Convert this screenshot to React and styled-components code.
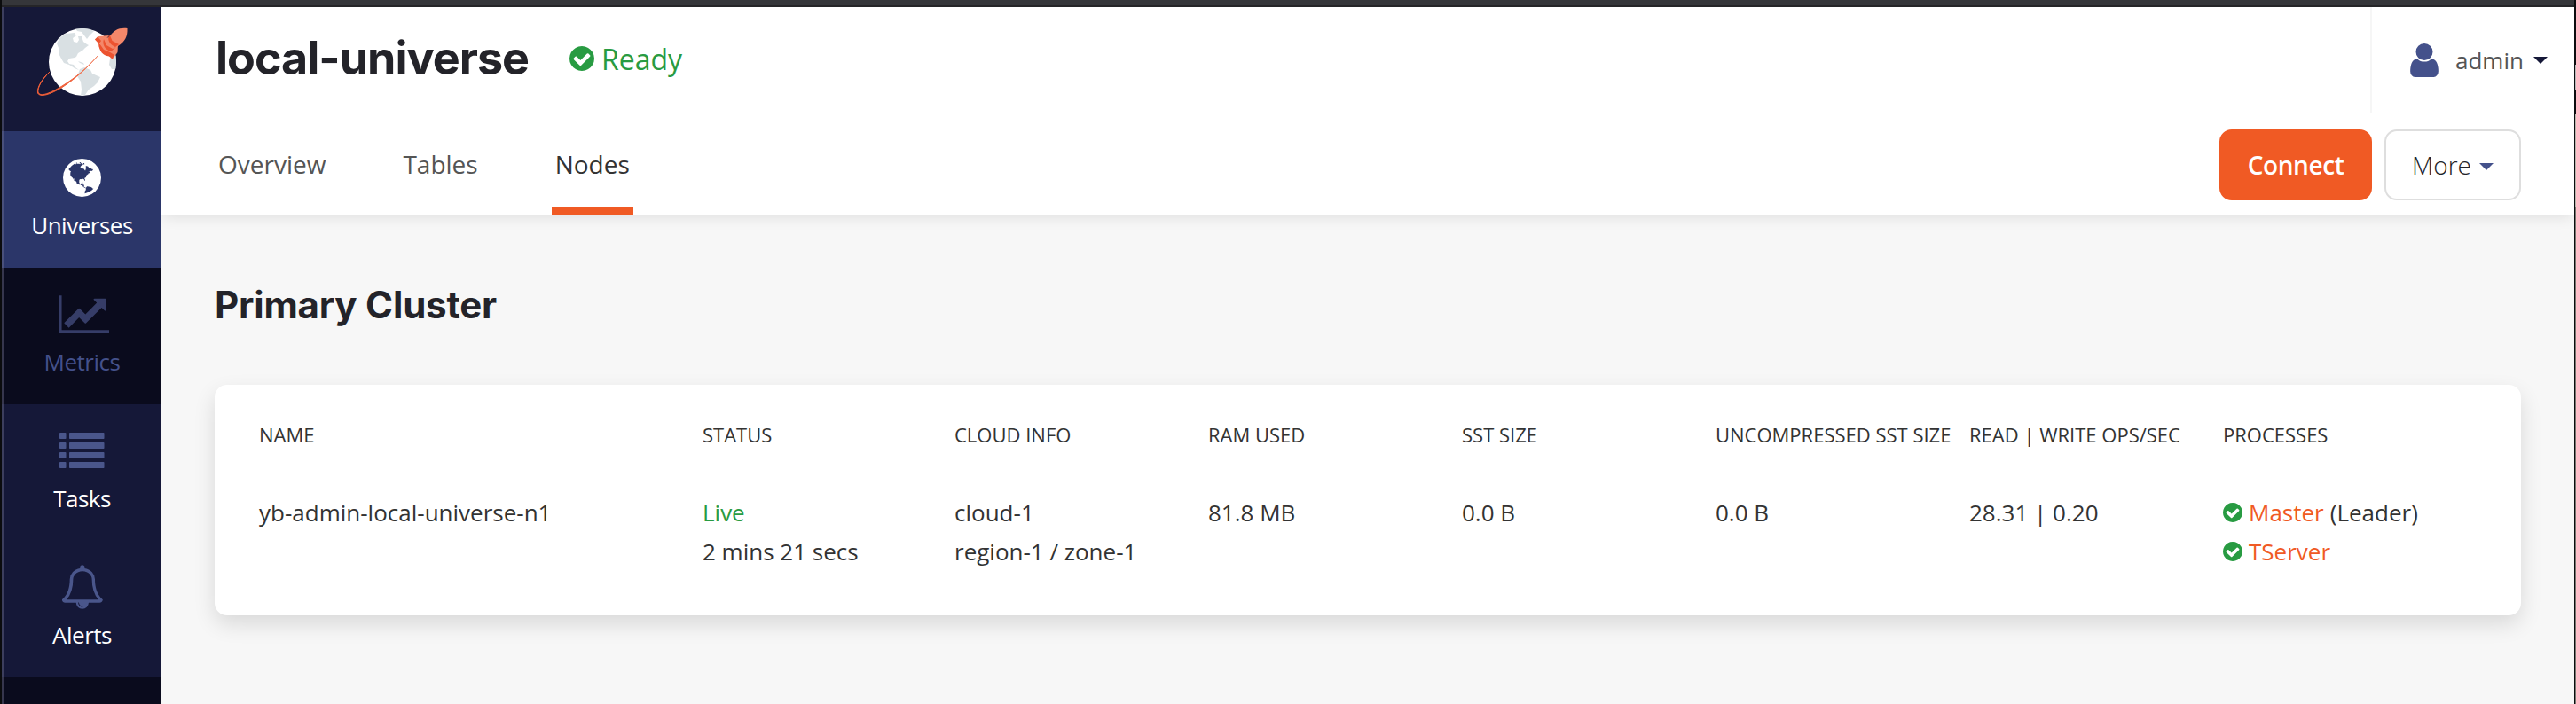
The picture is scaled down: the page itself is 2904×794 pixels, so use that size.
import React from "react";
import styled, { createGlobalStyle } from "styled-components";

const GlobalStyle = createGlobalStyle`
  *, *::before, *::after { box-sizing: border-box; }
  body {
    margin: 0;
    background: #0b0c0e;
    color: #333;
    font-family: "Open Sans", "Noto Sans", sans-serif;
    font-size: 26px;
  }
`;

const Window = styled.div`
  display: flex;
  flex-direction: column;
  width: 2904px;
  height: 794px;
  overflow: hidden;
  padding: 0 2px;
  background:
    linear-gradient(
      #0b0c0e 73px,
      #b9b9b9 73px 102px,
      #0b0c0e 102px 129px,
      #b8b6ac 129px 234px,
      #77776f 234px
    ) right / 1px 100% no-repeat,
    #0b0c0e;
`;

const WindowBar = styled.div`
  flex: none;
  height: 8px;
  background: #35363a;
  border-bottom: 2px solid #252528;
`;

const Body = styled.div`
  flex: 1;
  display: flex;
  min-height: 0;
`;

const Sidebar = styled.nav`
  flex: none;
  width: 180px;
  background: #0a0b1d;
  box-shadow: inset 2px 0 0 rgba(120, 120, 150, 0.4);
`;

const LogoBox = styled.div`
  height: 140px;
  padding: 20px 0 0 39px;
  background: #151838;
  box-shadow: inset 2px 0 0 rgba(120, 120, 150, 0.4);
`;

const itemTone = {
  active: { bg: "#2b3669", text: "#fff", icon: "#fff" },
  disabled: { bg: "#0a0b1d", text: "#44518b", icon: "#363d68" },
  normal: { bg: "#151838", text: "#fff", icon: "#4a568b" },
};

const NavItem = styled.a`
  display: flex;
  flex-direction: column;
  align-items: center;
  height: 154px;
  padding: 26px 0 0 1px;
  font-size: 26px;
  line-height: 36px;
  letter-spacing: -0.5px;
  color: ${(p) => itemTone[p.$tone].text};
  background: ${(p) => itemTone[p.$tone].bg};
  box-shadow: inset 2px 0 0 rgba(120, 120, 150, 0.4);
  svg { fill: ${(p) => itemTone[p.$tone].icon}; }
`;

const NavIcon = styled.span`
  display: flex;
  align-items: center;
  justify-content: center;
  height: 52px;
  margin-bottom: 10px;
  padding-left: ${(p) => p.$nudge || 0}px;
`;

const Main = styled.main`
  flex: 1;
  display: flex;
  flex-direction: column;
  min-width: 0;
  background: #f7f7f7;
`;

const Header = styled.header`
  flex: none;
  height: 234px;
  background: #fff;
  box-shadow: 0 4px 16px -2px rgba(0, 0, 0, 0.11);
  clip-path: inset(0 0 -30px 0);
`;

const TitleRow = styled.div`
  display: flex;
  height: 120px;
  padding-left: 61px;
`;

const Title = styled.h1`
  margin: 0;
  width: 399px;
  white-space: nowrap;
  font: 700 52px/116px Inter, sans-serif;
  letter-spacing: -1px;
  color: #232329;
`;

const Status = styled.div`
  display: flex;
  align-items: center;
  height: 116px;
  gap: 8px;
  font-size: 32px;
  color: #289b42;
`;

const UserMenu = styled.div`
  display: flex;
  align-items: center;
  width: 230px;
  margin-left: auto;
  padding-left: 43px;
  border-left: 2px solid #f6f6f6;
  font-size: 26px;
  color: #555;
`;

const UserName = styled.span`
  margin: 0 11px 0 19px;
`;

const Caret = styled.span`
  border: 8px solid transparent;
  border-top-color: ${(p) => p.$color};
  border-bottom: 0;
`;

const MenuCaret = styled(Caret)`
  margin-top: 4px;
`;

const TabRow = styled.div`
  display: flex;
  justify-content: space-between;
  height: 114px;
  padding: 0 60px;
`;

const Tabs = styled.div`
  display: flex;
  gap: 79px;
`;

const Tab = styled.a`
  height: 114px;
  padding: 0 4px;
  font-size: 28px;
  line-height: 114px;
  color: ${(p) => (p.$active ? "#333" : "#555")};
  box-shadow: ${(p) => (p.$active ? "inset 0 -8px 0 #f05a24" : "none")};
`;

const Actions = styled.div`
  display: flex;
  gap: 14px;
  padding-top: 18px;
`;

const Button = styled.button`
  display: flex;
  align-items: center;
  justify-content: center;
  gap: 9px;
  width: ${(p) => (p.$primary ? 172 : 154)}px;
  height: 80px;
  padding: 0 0 1px;
  border: 2px solid ${(p) => (p.$primary ? "#f05a24" : "#dedede")};
  border-radius: 14px;
  background: ${(p) => (p.$primary ? "#f05a24" : "#fff")};
  color: ${(p) => (p.$primary ? "#fff" : "#232329")};
  font: ${(p) => (p.$primary ? 600 : 300)} 28px "Open Sans", sans-serif;
  letter-spacing: ${(p) => (p.$primary ? "-0.4px" : "0")};
`;

const Content = styled.section`
  padding: 72px 60px 0;
`;

const Heading = styled.h2`
  margin: 0 0 60px;
  font: 700 42px/60px Inter, sans-serif;
  letter-spacing: -0.2px;
  color: #232329;
`;

const Card = styled.div`
  height: 260px;
  padding: 38px 50px;
  border-radius: 14px;
  background: #fff;
  box-shadow: 0 10px 24px rgba(0, 0, 0, 0.12);
`;

const Row = styled.div`
  display: grid;
  grid-template-columns: 500px 284px repeat(5, 286px) 1fr;
  line-height: 44px;
  white-space: nowrap;
`;

const HeadRow = styled(Row)`
  height: 84px;
  line-height: 36px;
  font-size: 22px;
`;

const Cell = styled.div``;

const Line = styled.div`
  display: flex;
  align-items: center;
`;

const LiveLine = styled(Line)`
  color: #289b42;
  font-weight: 500;
`;

const ProcessLink = styled.a`
  margin: 0 7px;
  color: #f05a24;
`;

const PATHS = {
  globe:
    "M896 128q209 0 385.5 103t279.5 279.5 103 385.5-103 385.5-279.5 279.5-385.5 103-385.5-103-279.5-279.5-103-385.5 103-385.5 279.5-279.5 385.5-103zm274 521q-2 1-9.5 9.5t-13.5 9.5q2 0 4.5-5t5-11 3.5-7q6-7 22-15 14-6 52-12 34-8 51 11-2-2 9.5-13t14.5-12q3-2 15-4.5t15-7.5l2-22q-12 1-17.5-7t-6.5-21q0 2-6 8 0-7-4.5-8t-11.5 1-9 1q-10-3-15-7.5t-8-16.5-4-15q-2-5-9.5-11t-9.5-10q-1-2-2.5-5.5t-3-6.5-4-5.5-5.5-2.5-7 5-7.5 10-4.5 5q-3-2-6-1.5t-4.5 1-4.5 3-5 3.5q-3 2-8.5 3t-8.5 2q15-5-1-11-10-4-16-3 9-4 7.5-12t-8.5-14h5q-1-4-8.5-8.5t-17.5-8.5-13-6q-8-5-34-9.5t-33-.5q-5 6-4.5 10.5t4 14 3.5 12.5q1 6-5.5 13t-6.5 12q0 7 14 15.5t10 21.5q-3 8-16 16t-16 12q-5 8-1.5 18.5t10.5 16.5q2 2 1.5 4t-3.5 4.5-5.5 4-6.5 3.5l-3 2q-11 5-20.5-6t-13.5-26q-7-25-16-30-23-8-29 1-5-13-41-26-25-9-58-4 6-1 0-15-7-15-19-12 3-6 4-17.5t1-13.5q3-13 12-23 1-1 7-8.5t9.5-13.5.5-6q35 4 50-11 5-5 11.5-17t10.5-17q9-6 14-5.5t14.5 5.5 14.5 5q14 1 15.5-11t-7.5-20q12 1 3-17-4-7-8-9-12-4-27 5-8 4 2 8-1-1-9.5 10.5t-16.5 17.5-16-5q-1-1-5.5-13.5t-9.5-13.5q-8 0-16 15 3-8-11-15t-24-8q19-12-8-27-7-4-20.5-5t-19.5 4q-5 7-5.5 11.5t5 8 10.5 5.5 11.5 4 8.5 3q14 10 8 14-2 1-8.5 3.5t-11.5 4.5-6 4q-3 4 0 14t-2 14q-5-5-9-17.5t-7-16.5q7 9-25 6l-10-1q-4 0-16 2t-20.5 1-13.5-8q-4-8 0-20 1-4 4-2-4-3-11-9.5t-10-8.5q-46 15-94 41 6 1 12-1 5-2 13-6.5t10-5.5q34-14 42-7l5-5q14 16 20 25-7-4-30-1-20 6-22 12 7 12 5 18-4-3-11.5-10t-14.5-11-15-5q-16 0-22 1-146 80-235 222 7 7 12 8 4 1 5 9t2.5 11 11.5-3q9 8 3 19 1-1 44 27 19 17 21 21 3 11-10 18-1-2-9-9t-9-4q-3 5 .5 18.5t10.5 12.5q-7 0-9.5 16t-2.5 35.5-1 23.5l2 1q-3 12 5.5 34.5t21.5 19.5q-13 3 20 43 6 8 8 9 3 2 12 7.5t15 10 10 10.5q4 5 10 22.5t14 23.5q-2 6 9.5 20t10.5 23q-1 0-2.5 1t-2.5 1q3 7 15.5 14t15.5 13q1 3 2 10t3 11 8 2q2-20-24-62-15-25-17-29-3-5-5.5-15.5t-4.5-14.5q2 0 6 1.5t8.5 3.5 7.5 4 2 3q-3 7 2 17.5t12 18.5 17 19 12 13q6 6 14 19.5t0 13.5q9 0 20 10.5t17 19.5q5 8 8 26t5 24q2 7 8.5 13.5t12.5 9.5l16 8 13 7q5 2 18.5 10.5t21.5 11.5q10 4 16 4t14.5-2.5 13.5-3.5q15-2 29 15t21 21q36 19 55 11-2 1 .5 7.5t8 15.5 9 14.5 5.5 8.5q5 6 18 15t18 15q6-4 7-9-3 8 7 20t18 10q14-3 14-32-31 15-49-18 0-1-2.5-5.5t-4-8.5-2.5-8.5 0-7.5 5-3q9 0 10-3.5t-2-12.5-4-13q-1-8-11-20t-12-15q-5 9-16 8t-16-9q0 1-1.5 5.5t-1.5 6.5q-13 0-15-1 1-3 2.5-17.5t3.5-22.5q1-4 5.5-12t7.5-14.5 4-12.5-4.5-9.5-17.5-2.5q-19 1-26 20-1 3-3 10.5t-5 11.5-9 7q-7 3-24 2t-24-5q-13-8-22.5-29t-9.5-37q0-10 2.5-26.5t3-25-5.5-24.5q3-2 9-9.5t10-10.5q2-1 4.5-1.5t4.5 0 4-1.5 3-6q-1-1-4-3-3-3-4-3 7 3 28.5-1.5t27.5 1.5q15 11 22-2 0-1-2.5-9.5t-.5-13.5q5 27 29 9 3 3 15.5 5t17.5 5q3 2 7 5.5t5.5 4.5 5-.5 8.5-6.5q10 14 12 24 11 40 19 44 7 3 11 2t4.5-9.5 0-14-1.5-12.5l-1-8v-18l-1-8q-15-3-18.5-12t1.5-18.5 15-18.5q1-1 8-3.5t15.5-6.5 12.5-8q21-19 15-35 7 0 11-9-1 0-5-3t-7.5-5-4.5-2q9-5 2-16 5-3 7.5-11t7.5-10q9 12 21 2 8-8 1-16 5-7 20.5-10.5t18.5-9.5q7 2 8-2t1-12 3-12q4-5 15-9t13-5l17-11q3-4 0-4 18 2 31-11 10-11-6-20 3-6-3-9.5t-15-5.5q3-1 11.5-.5t10.5-1.5q15-10-7-16-17-5-43 12zm-163 877q206-36 351-189-3-3-12.5-4.5t-12.5-3.5q-18-7-24-8 1-7-2.5-13t-8-9-12.5-8-11-7q-2-2-7-6t-7-5.5-7.5-4.5-8.5-2-10 1l-3 1q-3 1-5.5 2.5t-5.5 3-4 3 0 2.5q-21-17-36-22-5-1-11-5.5t-10.5-7-10-1.5-11.5 7q-5 5-6 15t-2 13q-7-5 0-17.5t2-18.5q-3-6-10.5-4.5t-12 4.5-11.5 8.5-9 6.5-8.5 5.5-8.5 7.5q-3 4-6 12t-5 11q-2-4-11.5-6.5t-9.5-5.5q2 10 4 35t5 38q7 31-12 48-27 25-29 40-4 22 12 26 0 7-8 20.5t-7 21.5q0 6 2 16z",
  chart:
    "M2048 1408v128h-2048v-1536h128v1408h1920zM1920 160v435q0 21-19.5 29.5t-35.5-7.5l-121-121-633 633q-10 10-23 10t-23-10l-233-233-416 416-192-192 585-585q10-10 23-10t23 10l233 233 464-464-121-121q-16-16-7.5-35.5t29.5-19.5h435q14 0 23 9t9 23z",
  bell:
    "M912 1696q0-16-16-16-59 0-101.5-42.5t-42.5-101.5q0-16-16-16t-16 16q0 73 51.5 124.5t124.5 51.5q16 0 16-16zM246 1408h1300q-266-300-266-832 0-51-24-105t-69-103-121.5-80.5-169.5-31.5-169.5 31.5-121.5 80.5-69 103-24 105q0 532-266 832zM1722 1408q0 52-38 90t-90 38h-448q0 106-75 181t-181 75-181-75-75-181h-448q-52 0-90-38t-38-90q50-42 91-88t85-119.5 74.5-158.5 50-206 19.5-260q0-152 117-282.5t307-158.5q-8-19-8-39 0-40 28-68t68-28 68 28 28 68q0 20-8 39 190 28 307 158.5t117 282.5q0 139 19.5 260t50 206 74.5 158.5 85 119.5 91 88z",
  user:
    "M1536 1399q0 109-62.5 187t-150.5 78h-854q-88 0-150.5-78t-62.5-187q0-85 8.5-160.5t31.5-152 58.5-131 94-89 134.5-34.5q131 128 313 128t313-128q76 0 134.5 34.5t94 89 58.5 131 31.5 152 8.5 160.5zm-256-887q0 159-112.5 271.5t-271.5 112.5-271.5-112.5-112.5-271.5 112.5-271.5 271.5-112.5 271.5 112.5 112.5 271.5z",
  check:
    "M1412 734q0-28-18-46l-91-90q-19-19-45-19t-45 19l-408 407-226-226q-19-19-45-19t-45 19l-91 90q-18 18-18 46 0 27 18 45l362 362q19 19 45 19 27 0 46-19l543-543q18-18 18-45zm252 162q0 209-103 385.5t-279.5 279.5-385.5 103-385.5-103-279.5-279.5-103-385.5 103-385.5 279.5-279.5 385.5-103 385.5 103 279.5 279.5 103 385.5z",
};

const Icon = ({ name, box, w, h, fill }) => (
  <svg width={w} height={h} viewBox={box} fill={fill}>
    <path d={PATHS[name]} />
  </svg>
);

const CheckIcon = ({ size }) => (
  <Icon name="check" box="128 128 1536 1536" w={size} h={size} fill="#289b42" />
);

const ListIcon = () => (
  <svg width="51" height="40" viewBox="0 0 51 40">
    {[0, 11, 22, 33].map((y) => (
      <g key={y}>
        <rect x="0" y={y} width="7.5" height="7" rx="0.7" />
        <rect x="11" y={y} width="39.5" height="7" rx="0.7" />
      </g>
    ))}
  </svg>
);

const Logo = () => (
  <svg width="104" height="82" viewBox="41 28 104 82">
    <defs>
      <clipPath id="disc">
        <circle cx="93" cy="70" r="38" />
      </clipPath>
      <linearGradient id="trail" x1="0" y1="1" x2="1" y2="0">
        <stop offset="0.4" stopColor="#ef5e38" />
        <stop offset="1" stopColor="#f28a6c" />
      </linearGradient>
    </defs>
    <circle cx="93" cy="70" r="38" fill="#fff" />
    <g clipPath="url(#disc)" fill="#d9e0e3">
      <path d="M67 43L74 38L84 37L86 40L82 43L83 47L87 48L89 45L88 41L92 41L94 47L98 50L100 51L96 54L93 57L88 60L86 64L84 65L78 66L76 69L78 72L83 73L85 76L89 79L84 77L78 73L72 71L69 66L66 60L66 54L64 49Z" />
      <path d="M85 32L96 31L106 35L101 40L98 44L95 40L92 36L87 35Z" />
      <path d="M90 78L95 76L102 79L104 83L113 87L110 93L106 97L100 101L96 107L91 108L92 101L91 92L87 86Z" />
      <path d="M127 61L124 66L123 73L126 78L132 78L133 60Z" />
      <path d="M88 69L94 71L95 73L90 71Z" />
    </g>
    <path
      d="M56 81C47 90 42 99 43 104C45 110 57 105 70 97C86 87 99 76 110 63C98 77 86 88 70 98.500C56 107 45 110 42.500 105C41.500 99 47 89 56 81Z"
      fill="#ef5e38"
      stroke="url(#trail)"
      strokeWidth="1"
    />
    <path d="M123 42C128 34 134 31 143.500 32C144 41 141 47 133 52L124 64L112 54C110 49 117 43 123 42Z" fill="#f4876a" />
    <path d="M123 40L111 41L107 44.500L112 49L116 48Z" fill="#f4876a" />
    <path d="M133 50L132.500 59L127 66.500L123 62L127 56Z" fill="#f4876a" />
    <path d="M107 44.500L110 41.500L114 46L112 49L117 56L124 59L129 62L126.500 66.500L123 63.500C116 63 112 58 111 49Z" fill="#ec5330" />
    <path d="M117 44L120 51L127 55L131 53L125 58C118 56 115 50 117 44Z" fill="#ec5330" />
    <path d="M124 40L126.500 46L134 50L130 53C125 51 121 46 122.500 41Z" fill="#ec5330" />
  </svg>
);

const NAV = [
  { label: "Universes", tone: "active", icon: <Icon name="globe" box="128 128 1536 1536" w={43} h={43} /> },
  { label: "Metrics", tone: "disabled", nudge: 4, icon: <Icon name="chart" box="0 0 2048 1536" w={57} h={43} /> },
  { label: "Tasks", tone: "normal", icon: <ListIcon /> },
  { label: "Alerts", tone: "normal", icon: <Icon name="bell" box="64 0 1664 1792" w={46} h={50} /> },
];

const HEADERS = [
  "NAME",
  "STATUS",
  "CLOUD INFO",
  "RAM USED",
  "SST SIZE",
  "UNCOMPRESSED SST SIZE",
  "READ | WRITE OPS/SEC",
  "PROCESSES",
];

export default function App() {
  return (
    <Window>
      <GlobalStyle />
      <WindowBar />
      <Body>
        <Sidebar>
          <LogoBox>
            <Logo />
          </LogoBox>
          {NAV.map((n) => (
            <NavItem key={n.label} $tone={n.tone}>
              <NavIcon $nudge={n.nudge}>{n.icon}</NavIcon>
              {n.label}
            </NavItem>
          ))}
        </Sidebar>
        <Main>
          <Header>
            <TitleRow>
              <Title>local-universe</Title>
              <Status>
                <CheckIcon size={28} />
                Ready
              </Status>
              <UserMenu>
                <Icon name="user" box="256 128 1280 1536" w={32} h={38} fill="#44518b" />
                <UserName>admin</UserName>
                <Caret $color="#151838" />
              </UserMenu>
            </TitleRow>
            <TabRow>
              <Tabs>
                <Tab>Overview</Tab>
                <Tab>Tables</Tab>
                <Tab $active>Nodes</Tab>
              </Tabs>
              <Actions>
                <Button $primary>Connect</Button>
                <Button>
                  More
                  <MenuCaret $color="#44518b" />
                </Button>
              </Actions>
            </TabRow>
          </Header>
          <Content>
            <Heading>Primary Cluster</Heading>
            <Card>
              <HeadRow>
                {HEADERS.map((h) => (
                  <Cell key={h}>{h}</Cell>
                ))}
              </HeadRow>
              <Row>
                <Cell>yb-admin-local-universe-n1</Cell>
                <Cell>
                  <LiveLine>Live</LiveLine>
                  <Line>2 mins 21 secs</Line>
                </Cell>
                <Cell>
                  <Line>cloud-1</Line>
                  <Line>region-1 / zone-1</Line>
                </Cell>
                <Cell>81.8 MB</Cell>
                <Cell>0.0 B</Cell>
                <Cell>0.0 B</Cell>
                <Cell>28.31 | 0.20</Cell>
                <Cell>
                  <Line>
                    <CheckIcon size={22} />
                    <ProcessLink>Master</ProcessLink>
                    (Leader)
                  </Line>
                  <Line>
                    <CheckIcon size={22} />
                    <ProcessLink>TServer</ProcessLink>
                  </Line>
                </Cell>
              </Row>
            </Card>
          </Content>
        </Main>
      </Body>
    </Window>
  );
}
